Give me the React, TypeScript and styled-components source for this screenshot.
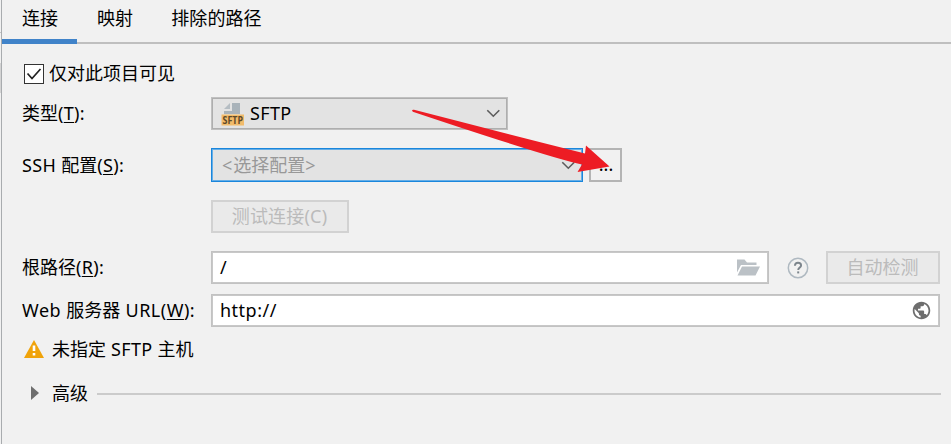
import React from 'react';
import styled, { createGlobalStyle } from 'styled-components';

const GlobalStyle = createGlobalStyle`
  *, *::before, *::after { box-sizing: border-box; }
  body { margin: 0; background: #f1f1f1; overflow: hidden; }
`;

const Window = styled.div`
  position: relative;
  display: flex;
  width: 951px;
  height: 444px;
  background: #f1f1f1;
  color: #000;
  font: 400 18px/24px 'Noto Sans', 'Noto Sans CJK SC', sans-serif;
  white-space: nowrap;
`;

const Gutter = styled.div`
  width: 2px;
  flex: none;
  border-right: 1px solid #a9acaf;
  background: linear-gradient(#f1f1f1 0 32px, #c4c4c4 32px 33px, #f1f1f1 33px 63px, #d4d4d4 63px 93px, #f1f1f1 93px);
`;

const Panel = styled.div`
  flex: 1;
  min-width: 0;
`;

const Tabs = styled.div`
  display: flex;
  height: 44px;
  border-bottom: 2px solid #bfbfbf;
`;

const Tab = styled.div<{ $active?: boolean }>`
  height: 44px;
  padding: 6px 20px 0 20px;
  letter-spacing: 0.1px;
  border-bottom: 5px solid ${p => (p.$active ? '#4083c9' : 'transparent')};
  ${p => p.$active && 'width: 75px;'}

  & + & {
    padding-right: 18px;
  }
`;

const Form = styled.div`
  padding: 18px 11px 0 20px;
`;

const Row = styled.div<{ $h: number; $gap: number }>`
  display: flex;
  align-items: center;
  height: ${p => p.$h}px;
  margin-bottom: ${p => p.$gap}px;
`;

const Label = styled.label`
  width: 189px;
  flex: none;
  padding-bottom: 2px;
`;

const SshLabel = styled(Label)`
  padding-bottom: 0;
`;

const Caption = styled.span`
  padding-bottom: 2px;
`;

const Latin = styled.span<{ $track?: number }>`
  letter-spacing: ${p => p.$track ?? 0.35}px;
`;

const Mnemonic = styled.span`
  text-decoration: underline;
  text-decoration-thickness: 1px;
  text-underline-offset: 2px;
  text-decoration-skip-ink: none;
`;

const CheckBox = styled.span`
  display: flex;
  width: 20px;
  height: 20px;
  margin: 0 5px 0 2px;
  border: 1px solid #333;
  background: #fff;
`;

const Combo = styled.div<{ $w: number; $focused?: boolean }>`
  display: flex;
  align-items: center;
  width: ${p => p.$w}px;
  height: 100%;
  padding: 0 7px 0 9px;
  border: 1px solid ${p => (p.$focused ? '#1a86dc' : '#c0c0c0')};
  box-shadow: inset 0 0 0 1px ${p => (p.$focused ? '#66aee6' : '#aeaeae')};
  background: #e3e3e3;
  color: ${p => (p.$focused ? '#989898' : '#000')};
`;

const Value = styled.span<{ $inset?: number }>`
  flex: 1;
  padding: 0 0 1px ${p => p.$inset ?? 0}px;
`;

const Placeholder = styled.span`
  flex: 1;
  padding-left: 1px;
`;

const Field = styled.div<{ $w: number }>`
  display: flex;
  align-items: center;
  width: ${p => p.$w}px;
  height: 100%;
  padding: 0 7px 0 8px;
  border: 1px solid #c2c2c2;
  box-shadow: inset 0 0 0 1px #c8c8c8;
  background: #fff;
`;

const Button = styled.div<{ $w: number; $disabled?: boolean }>`
  display: flex;
  align-items: center;
  justify-content: center;
  width: ${p => p.$w}px;
  height: 100%;
  padding: 0 1px 1px 0;
  border: 2px solid ${p => (p.$disabled ? '#d2d2d2' : '#b4b4b4')};
  background: ${p => (p.$disabled ? '#eaeaea' : '#f1f1f1')};
  color: ${p => (p.$disabled ? '#bbb' : '#000')};
`;

const Indent = styled.div`
  width: 189px;
  flex: none;
`;

const BrowseButton = styled(Button)`
  margin-left: 6px;
  padding: 0 0 3px 1px;
`;

const HelpIcon = styled.svg`
  margin: 0 17px 0 18px;
`;

const WarningIcon = styled.svg`
  margin: 0 8px 2px 2px;
`;

const Twisty = styled.svg`
  margin: 0 13px 3px 9px;
`;

const Rule = styled.div`
  flex: 1;
  height: 2px;
  margin: 0 -1px 0 9px;
  background: #cbcbcb;
`;

const PointerArrow = styled.svg`
  position: absolute;
  left: 0;
  top: 0;
  pointer-events: none;
`;

const Chevron = () => (
  <svg width="14" height="9" viewBox="0 0 14 9" fill="none" stroke="#5c5c5c" strokeWidth="1.6">
    <path d="M1.3 1.2 7.3 7.2 13.3 1.2" />
  </svg>
);

const SftpIcon = () => (
  <svg width="24" height="24" viewBox="0 0 24 24">
    <path d="M9 1V7H3Z" fill="#a9b3ba" opacity=".8" />
    <path d="M11 1H19V12H3V9H11Z" fill="#a9b3ba" />
    <rect x="0.5" y="12.5" width="22.5" height="11" fill="#f2bb6a" />
    <text x="1.5" y="21.9" fontFamily="Open Sans, sans-serif" fontSize="10.6" fontWeight="700" textLength="20.5" lengthAdjust="spacingAndGlyphs" fill="#5d4a2b">SFTP</text>
  </svg>
);

const FolderIcon = () => (
  <svg width="24" height="17" viewBox="0 0 24 17" fill="#bbc1c6">
    <path d="M0 0.5H7.5L10 3.5H19.5V6H4L0 13.5Z" />
    <path d="M5 7.5H23L18.5 16.5H.5Z" />
  </svg>
);

const GlobeIcon = () => (
  <svg width="21" height="21" viewBox="0 0 24 24" fill="#6e6e6e">
    <path d="M12 2C6.48 2 2 6.48 2 12s4.48 10 10 10 10-4.48 10-10S17.52 2 12 2zm-1 17.93c-3.95-.49-7-3.85-7-7.93 0-.62.08-1.21.21-1.79L9 15v1c0 1.1.9 2 2 2v1.93zm6.9-2.54c-.26-.81-1-1.39-1.9-1.39h-1v-3c0-.55-.45-1-1-1H8v-2h2c.55 0 1-.45 1-1V7h2c1.1 0 2-.9 2-2v-.41c2.93 1.19 5 4.06 5 7.41 0 2.08-.8 3.97-2.1 5.39z" />
  </svg>
);

export default function App() {
  return (
    <>
      <GlobalStyle />
      <Window>
        <Gutter />
        <Panel>
          <Tabs>
            <Tab $active>连接</Tab>
            <Tab>映射</Tab>
            <Tab>排除的路径</Tab>
          </Tabs>
          <Form>
            <Row $h={24} $gap={11}>
              <CheckBox>
                <svg width="18" height="18" viewBox="0 0 18 18" fill="none" stroke="#222" strokeWidth="1.7">
                  <path d="M2.5 8.5 7 13.5 15.5 4" />
                </svg>
              </CheckBox>
              <Caption>仅对此项目可见</Caption>
            </Row>
            <Row $h={33} $gap={18}>
              <Label>类型<Latin $track={0.3}>(<Mnemonic>T</Mnemonic>):</Latin></Label>
              <Combo $w={297}>
                <SftpIcon />
                <Value $inset={5}><Latin>SFTP</Latin></Value>
                <Chevron />
              </Combo>
            </Row>
            <Row $h={34} $gap={18}>
              <SshLabel><Latin>SSH </Latin>配置<Latin>(<Mnemonic>S</Mnemonic>):</Latin></SshLabel>
              <Combo $w={372} $focused>
                <Placeholder><Latin $track={1}>&lt;</Latin>选择配置<Latin $track={1}>&gt;</Latin></Placeholder>
                <Chevron />
              </Combo>
              <BrowseButton $w={33}>...</BrowseButton>
            </Row>
            <Row $h={33} $gap={18}>
              <Indent />
              <Button $w={138} $disabled><Latin $track={0.2}>测试连接(C)</Latin></Button>
            </Row>
            <Row $h={33} $gap={10}>
              <Label>根路径<Latin>(<Mnemonic>R</Mnemonic>):</Latin></Label>
              <Field $w={558}>
                <Value>/</Value>
                <FolderIcon />
              </Field>
              <HelpIcon width="22" height="22" viewBox="0 0 22 22" fill="none">
                <circle cx="11" cy="11" r="9.7" stroke="#afb9c1" strokeWidth="1.5" />
                <path d="M7.9 8.8C8 6.8 9.2 5.8 11 5.8c1.8 0 3.1 1 3.1 2.6 0 2-2.9 2.2-2.9 4.6" stroke="#7c858c" strokeWidth="1.9" />
                <rect x="10.2" y="14.4" width="2" height="2" fill="#7c858c" />
              </HelpIcon>
              <Button $w={114} $disabled>自动检测</Button>
            </Row>
            <Row $h={33} $gap={11}>
              <Label><Latin $track={0.5}>Web </Latin>服务器<Latin $track={0.5}> URL(<Mnemonic>W</Mnemonic>):</Latin></Label>
              <Field $w={729}>
                <Value><Latin $track={0.5}>http://</Latin></Value>
                <GlobeIcon />
              </Field>
            </Row>
            <Row $h={24} $gap={20}>
              <WarningIcon width="20" height="18" viewBox="0 0 20 18">
                <path d="M10 0 20 18H0Z" fill="#f0a30a" />
                <path d="M8.7 5.5h2.6V11H8.7ZM8.7 13h2.6v2.6H8.7Z" fill="#fff" />
              </WarningIcon>
              <Caption>未指定<Latin> SFTP </Latin>主机</Caption>
            </Row>
            <Row $h={24} $gap={0}>
              <Twisty width="8" height="14" viewBox="0 0 8 14">
                <path d="M0 0 8 7 0 14Z" fill="#6e6e6e" />
              </Twisty>
              <Caption>高级</Caption>
              <Rule />
            </Row>
          </Form>
        </Panel>
        <PointerArrow width="951" height="444" viewBox="0 0 951 444">
          <path d="M412 110.2Q412.5 109.4 414 109.8Q500 132 585 153.5L586 145.5L609.5 166.5L577.5 172L582 164.5Q548 157 412.8 111.7Z" fill="#ed1c24" />
        </PointerArrow>
      </Window>
    </>
  );
}
